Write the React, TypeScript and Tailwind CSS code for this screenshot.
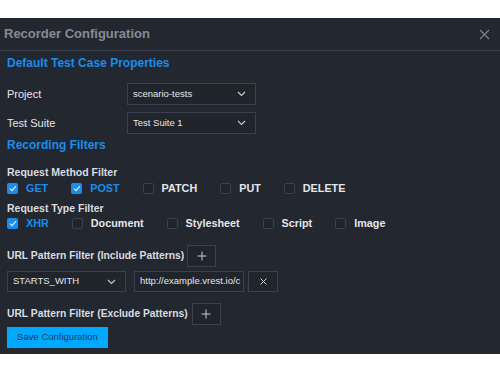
import React, { useState } from 'react';

const font = { fontFamily: '"Liberation Sans", Arial, sans-serif' };

function Chevron() {
  return (
    <svg width="9" height="6" viewBox="0 0 9 6" fill="none">
      <path d="M1 1l3.5 3.5L8 1" stroke="#c9cdd3" strokeWidth="1.1" />
    </svg>
  );
}

function Select({ value, className }: { value: string; className: string }) {
  return (
    <div className={`flex items-center justify-between border border-[#3a404d] bg-[#20242b] pl-[5px] pr-[9px] text-[9.5px] text-[#e3e6ea] ${className}`}>
      <span>{value}</span>
      <Chevron />
    </div>
  );
}

function Check({ label, checked, onToggle }: { label: string; checked: boolean; onToggle: () => void }) {
  return (
    <label className="flex items-center gap-[8px] cursor-pointer" onClick={onToggle}>
      {checked ? (
        <span className="flex h-[11px] w-[11px] items-center justify-center rounded-[2px] bg-[#1a8cec]">
          <svg width="8" height="7" viewBox="0 0 8 7" fill="none">
            <path d="M1 3.6l2 2L7 1.2" stroke="#dcecff" strokeWidth="1.2" />
          </svg>
        </span>
      ) : (
        <span className="h-[11px] w-[11px] rounded-[2px] border border-[#3a404d] bg-[#20242b]" />
      )}
      <span className={`text-[10.8px] font-bold ${checked ? 'text-[#1a8cec]' : 'text-[#e3e6ea]'}`}>{label}</span>
    </label>
  );
}

function IconButton({ children, className }: { children: React.ReactNode; className: string }) {
  return (
    <button className={`flex items-center justify-center border border-[#3a404d] bg-[#20242b] ${className}`}>
      {children}
    </button>
  );
}

const Plus = () => (
  <svg width="10" height="10" viewBox="0 0 10 10" fill="none">
    <path d="M5 0.5v9M0.5 5h9" stroke="#c9cdd3" strokeWidth="1" />
  </svg>
);

export default function App() {
  const [methods, setMethods] = useState<Record<string, boolean>>({
    GET: true, POST: true, PATCH: false, PUT: false, DELETE: false,
  });
  const [types, setTypes] = useState<Record<string, boolean>>({
    XHR: true, Document: false, Stylesheet: false, Script: false, Image: false,
  });

  return (
    <div className="h-[375px] w-[500px] bg-white pt-[18px]" style={font}>
      <div className="h-[336px] bg-[#23272f]">
        <div className="flex h-[33px] items-center justify-between border-b border-[#363c4a] pl-[4px] pr-[10px]">
          <h1 className="text-[13px] font-bold text-[#868b94]">Recorder Configuration</h1>
          <svg width="11" height="11" viewBox="0 0 11 11" fill="none">
            <path d="M1 1l9 9M10 1l-9 9" stroke="#7d828b" strokeWidth="1.2" />
          </svg>
        </div>

        <div className="px-[7px]">
          <h2 className="mt-[4px] text-[12px] font-bold leading-[16px] text-[#1a8cec]">Default Test Case Properties</h2>

          <div className="mt-[12px] flex items-center">
            <span className="w-[120px] text-[11px] text-[#e3e6ea]">Project</span>
            <Select value="scenario-tests" className="h-[22px] w-[129px]" />
          </div>
          <div className="mt-[7px] flex items-center">
            <span className="w-[120px] text-[11px] text-[#e3e6ea]">Test Suite</span>
            <Select value="Test Suite 1" className="h-[22px] w-[129px]" />
          </div>

          <h2 className="mt-[3px] text-[12px] font-bold leading-[16px] text-[#1a8cec]">Recording Filters</h2>

          <h3 className="mt-[12px] text-[10.5px] font-bold leading-[14px] text-[#d9dce0]">Request Method Filter</h3>
          <div className="mt-[2px] flex h-[14px] items-center gap-[23px]">
            {Object.keys(methods).map((m) => (
              <Check key={m} label={m} checked={methods[m]} onToggle={() => setMethods({ ...methods, [m]: !methods[m] })} />
            ))}
          </div>

          <h3 className="mt-[6px] text-[10.5px] font-bold leading-[14px] text-[#d9dce0]">Request Type Filter</h3>
          <div className="mt-[1px] flex h-[14px] items-center gap-[23px]">
            {Object.keys(types).map((t) => (
              <Check key={t} label={t} checked={types[t]} onToggle={() => setTypes({ ...types, [t]: !types[t] })} />
            ))}
          </div>

          <div className="mt-[15px] flex h-[22px] items-center gap-[3px]">
            <span className="text-[10.3px] font-bold text-[#d9dce0]">URL Pattern Filter (Include Patterns)</span>
            <IconButton className="h-[22px] w-[29px]"><Plus /></IconButton>
          </div>

          <div className="mt-[4px] flex h-[21px] items-center">
            <Select value="STARTS_WITH" className="h-[21px] w-[119px] pl-[5px]" />
            <div className="ml-[8px] flex h-[21px] w-[110px] items-center overflow-hidden whitespace-nowrap border border-[#3a404d] bg-[#20242b] pl-[5px] text-[9.5px] text-[#e3e6ea]">
              http://example.vrest.io/c
            </div>
            <IconButton className="ml-[4px] h-[21px] w-[30px]">
              <svg width="7" height="7" viewBox="0 0 7 7" fill="none">
                <path d="M0.5 0.5l6 6M6.5 0.5l-6 6" stroke="#c9cdd3" strokeWidth="1" />
              </svg>
            </IconButton>
          </div>

          <div className="mt-[11px] flex h-[22px] items-center gap-[4px]">
            <span className="text-[10.3px] font-bold text-[#d9dce0]">URL Pattern Filter (Exclude Patterns)</span>
            <IconButton className="h-[22px] w-[29px]"><Plus /></IconButton>
          </div>

          <button className="mt-[2px] flex h-[21px] w-[101px] items-center justify-center bg-[#00a8ff] text-[9.5px] text-[#1d3a5e]">
            Save Configuration
          </button>
        </div>
      </div>
    </div>
  );
}
